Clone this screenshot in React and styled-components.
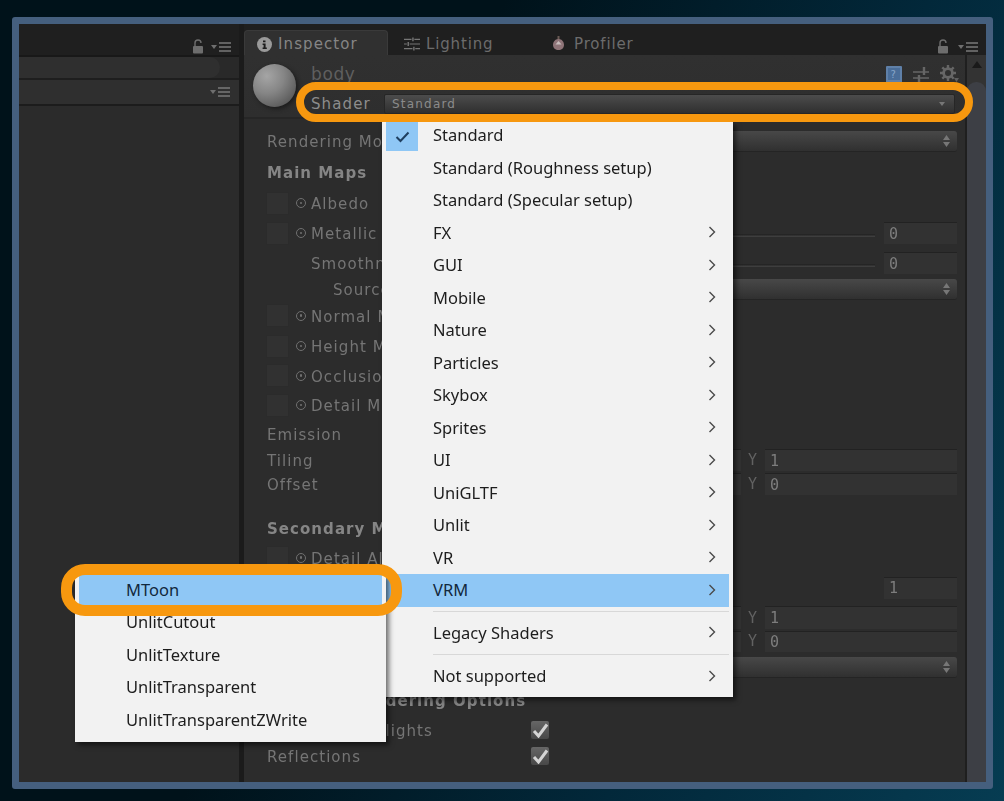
import React from "react";
import styled, { createGlobalStyle } from "styled-components";

const GlobalStyle = createGlobalStyle`
  html, body { margin: 0; height: 100%; }
  body {
    background: linear-gradient(112deg, #00121a 38%, #02283a 70%, #063c52 100%);
    font-family: "DejaVu Sans", sans-serif;
    overflow: hidden;
  }
`;

const Page = styled.div`
  width: 1004px;
  height: 801px;
  box-sizing: border-box;
  padding: 17px 11px 12px 12px;
`;

const Frame = styled.div`
  position: relative;
  height: 100%;
  box-sizing: border-box;
  border: 7px solid #455f7e;
  border-radius: 3px;
  display: grid;
  grid-template-columns: 220px 5px 1fr;
  background: #2c2c2c;
  overflow: hidden;
`;

const LeftPane = styled.div`
  display: flex;
  flex-direction: column;
  filter: blur(0.45px);
`;

const Divider = styled.div`
  background: #1b1b1b;
`;

const LeftTop = styled.div`
  height: 31px;
  background: #1f1f1f;
  display: flex;
  align-items: center;
  justify-content: flex-end;
  gap: 7px;
  padding-right: 7px;
  box-sizing: border-box;
  padding-top: 14px;
`;

const SearchRow = styled.div`
  height: 25px;
  background: #292929;
  border-top: 2px solid #181818;
  border-bottom: 2px solid #1e1e1e;
  box-sizing: border-box;
  padding-right: 19px;
`;

const SearchPill = styled.div`
  height: 100%;
  background: #2f2f2f;
  border-radius: 0 11px 11px 0;
`;

const LeftBar = styled.div`
  height: 26px;
  background: #2f2f2f;
  border-bottom: 2px solid #1c1c1c;
  box-sizing: border-box;
  display: flex;
  align-items: center;
  justify-content: flex-end;
  padding-right: 8px;
`;

const LeftBody = styled.div`
  flex: 1;
  background: #2b2b2b;
`;

const RightPane = styled.div`
  display: flex;
  flex-direction: column;
  min-width: 0;
  filter: blur(0.45px);
`;

const TabBar = styled.div`
  height: 31px;
  flex: none;
  background: #1f1f1f;
  display: flex;
  align-items: flex-end;
  padding-right: 7px;
`;

const Tab = styled.div`
  width: ${(p) => p.$width}px;
  height: 25px;
  box-sizing: border-box;
  display: flex;
  align-items: center;
  gap: ${(p) => p.$gap || 6}px;
  padding-left: ${(p) => p.$pad}px;
  padding-top: 2px;
  font-size: 15px;
  letter-spacing: ${(p) => (p.$active ? 1.1 : 0.85)}px;
  color: ${(p) => (p.$active ? "#858585" : "#6c6c6c")};
  background: ${(p) => (p.$active ? "#303030" : "transparent")};
  border-radius: 4px 4px 0 0;
  border: ${(p) => (p.$active ? "1px solid #3a3a3a" : "none")};
  border-bottom: none;
`;

const TabTools = styled.div`
  margin-left: auto;
  display: flex;
  align-items: center;
  gap: 9px;
  padding-bottom: 1px;
`;

const Body = styled.div`
  flex: 1;
  display: flex;
  min-height: 0;
`;

const Content = styled.div`
  flex: 1;
  min-width: 0;
  display: flex;
  flex-direction: column;
`;

const Header = styled.div`
  height: 64px;
  flex: none;
  box-sizing: border-box;
  background: linear-gradient(#303030, #2e2e2e);
  border-bottom: 2px solid #262626;
  display: flex;
  padding: 9px 10px 0 9px;
`;

const Sphere = styled.div`
  width: 43px;
  height: 43px;
  flex: none;
  border-radius: 50%;
  background: radial-gradient(circle at 32% 28%, #a5a5a5 0%, #868686 40%, #5a5a5a 80%, #464646 100%);
  box-shadow: 2px 2px 4px #1b1b1b;
`;

const HeaderMain = styled.div`
  flex: 1;
  margin-left: 15px;
  display: flex;
  flex-direction: column;
`;

const NameRow = styled.div`
  height: 20px;
  display: flex;
  align-items: center;
  font-size: 17px;
  letter-spacing: 0.6px;
  color: #5f5f5f;
`;

const HeaderIcons = styled.div`
  margin-left: auto;
  display: flex;
  align-items: center;
  gap: 11px;
  margin-right: -5px;
`;

const ShaderRow = styled.div`
  display: flex;
  align-items: center;
  height: 22px;
  margin-top: 9px;
  font-size: 15px;
  letter-spacing: 1.1px;
  color: #8c8c8c;
`;

const ShaderLabel = styled.span`
  width: 73px;
  flex: none;
`;

const ShaderSelect = styled.div`
  flex: 1;
  height: 20px;
  box-sizing: border-box;
  display: flex;
  align-items: center;
  justify-content: space-between;
  padding: 0 9px 0 7px;
  font-size: 12px;
  letter-spacing: 1.2px;
  color: #8b8b8b;
  border-radius: 2px;
  border: 1px solid #262626;
  background: linear-gradient(#4c4c4c, #2f2f2f);
`;

const Inspector = styled.div`
  flex: 1;
  padding: 10px 8px 0 22px;
`;

const Row = styled.div`
  height: ${(p) => p.$h}px;
  margin-top: ${(p) => p.$top || 0}px;
  display: flex;
  align-items: center;
  padding-left: ${(p) => p.$indent || 0}px;
  white-space: nowrap;
  font-size: 15px;
  letter-spacing: 1.05px;
  font-weight: ${(p) => (p.$bold ? 700 : 400)};
  color: ${(p) => (p.$bold ? "#858585" : "#757575")};
`;

const Label = styled.span`
  padding-top: ${(p) => (p.$bold ? 5 : 2)}px;
  margin-left: 1px;
`;

const Swatch = styled.div`
  width: 23px;
  height: 23px;
  flex: none;
  margin-right: 7px;
  background: #313131;
  box-shadow: inset 0 0 0 1px #2b2b2b;
`;

const DotIcon = styled.span`
  width: 10px;
  height: 10px;
  flex: none;
  box-sizing: border-box;
  margin-right: 4px;
  border: 1.2px solid #707070;
  border-radius: 50%;
  position: relative;
  &::after {
    content: "";
    position: absolute;
    inset: 2.8px;
    background: #707070;
    border-radius: 50%;
  }
`;

const Controls = styled.div`
  margin-left: auto;
  display: flex;
  align-items: center;
`;

const Select = styled.div`
  width: 300px;
  height: 21px;
  box-sizing: border-box;
  display: flex;
  align-items: center;
  justify-content: flex-end;
  padding-right: 7px;
  border-radius: 3px;
  background: linear-gradient(#484848, #303030);
  border-bottom: 1px solid #242424;
`;

const Field = styled.div`
  width: ${(p) => p.$w}px;
  height: ${(p) => p.$fh || 22}px;
  box-sizing: border-box;
  padding-left: 5px;
  display: flex;
  align-items: center;
  background: #323232;
  border-top: 1px solid #222222;
  font-family: "DejaVu Sans Mono", monospace;
  font-size: 15px;
  letter-spacing: 0;
  font-weight: 400;
  color: #7d7d7d;
`;

const SliderTrack = styled.div`
  width: 300px;
  height: 3px;
  margin-right: 9px;
  margin-top: 4px;
  background: linear-gradient(#1f1f1f, #444444);
`;

const AxisLabel = styled.span`
  width: 24px;
  box-sizing: border-box;
  padding-left: 7px;
  font-family: "DejaVu Sans Mono", monospace;
  font-size: 15px;
  letter-spacing: 0;
  color: #626262;
`;

const CheckBox = styled.div`
  width: 18px;
  height: 18px;
  margin-right: 408px;
  border-radius: 2px;
  background: linear-gradient(#666666, #484848);
  display: flex;
  align-items: center;
  justify-content: center;
`;

const Scrollbar = styled.div`
  width: 21px;
  flex: none;
  box-sizing: border-box;
  background: #333333;
  border-left: 2px solid #1f1f1f;
  display: flex;
  flex-direction: column;
  align-items: center;
`;

const ScrollArrow = styled.div`
  width: 0;
  height: 0;
  margin-top: 6px;
  border-left: 5px solid transparent;
  border-right: 5px solid transparent;
  border-bottom: 7px solid #1a1a1a;
`;

const ScrollThumb = styled.div`
  flex: 1;
  width: 100%;
  margin-top: 14px;
  border-radius: 9px 9px 0 0;
  background: #3d3f45;
`;

const Menu = styled.div`
  position: absolute;
  left: ${(p) => p.$left}px;
  top: ${(p) => p.$top}px;
  width: ${(p) => p.$width}px;
  box-sizing: border-box;
  padding: 0 4px ${(p) => p.$bottom}px;
  overflow: hidden;
  background: #f2f2f2;
  box-shadow: 3px 3px 5px rgba(0, 0, 0, 0.55);
  font-family: "Noto Sans", sans-serif;
  font-size: 16.5px;
  color: #1d1d1d;
`;

const MenuItem = styled.div`
  height: 32.5px;
  box-sizing: border-box;
  display: flex;
  align-items: center;
  padding: 0 13px 2px 47px;
  position: relative;
  background: ${(p) => (p.$hot ? "#8fc7f5" : "transparent")};
  color: ${(p) => (p.$hot ? "#12283c" : "#1d1d1d")};
  &:first-child {
    margin-top: ${(p) => p.$lead || 0}px;
  }
`;

const MenuSeparator = styled.div`
  height: ${(p) => p.$h}px;
  display: flex;
  align-items: center;
  margin-left: 47px;
  &::after {
    content: "";
    flex: 1;
    height: 1px;
    background: #d8d8d8;
  }
`;

const CheckCell = styled.div`
  position: absolute;
  left: 0;
  top: 3px;
  width: 32px;
  height: 29px;
  background: #8fc7f5;
  display: flex;
  align-items: center;
  justify-content: center;
`;

const Chevron = styled.svg`
  margin-left: auto;
  width: 8px;
  height: 12px;
`;

const Ring = styled.div`
  position: absolute;
  left: ${(p) => p.$left}px;
  top: ${(p) => p.$top}px;
  width: ${(p) => p.$width}px;
  height: ${(p) => p.$height}px;
  box-sizing: border-box;
  border: ${(p) => p.$stroke}px solid #f7980f;
  border-radius: ${(p) => p.$radius}px;
`;

const LockIcon = () => (
  <svg width="12" height="15" viewBox="0 0 12 15">
    <path d="M3 7V4a3 3 0 0 1 6 0" fill="none" stroke="#6d6d6d" strokeWidth="1.4" />
    <rect x="1" y="7" width="10" height="7.5" rx="1" fill="#6d6d6d" />
  </svg>
);

const PaneMenuIcon = () => (
  <svg width="21" height="10" viewBox="0 0 21 10">
    <path d="M0 3h6L3 7z" fill="#6f6f6f" />
    <path d="M8 1h12M8 5h12M8 9h12" stroke="#7a7a7a" strokeWidth="1.5" />
  </svg>
);

const InfoIcon = () => (
  <svg width="15" height="15" viewBox="0 0 15 15">
    <circle cx="7.5" cy="7.5" r="7.5" fill="#9a9a9a" />
    <path d="M6 3.5h2.5v1.7H6zM5.6 6.5h3v4h1.2v1.4H5.6v-1.4h1V7.9h-1z" fill="#1d1d1d" />
  </svg>
);

const LightingIcon = () => (
  <svg width="16" height="16" viewBox="0 0 17 16">
    <path d="M0 3h8M11 3h6M0 8h3M6 8h11M0 13h9M12 13h5" stroke="#767676" strokeWidth="1.3" />
    <path d="M9.5 1v4M4.5 6v4M10.5 11v4" stroke="#767676" strokeWidth="1.5" />
  </svg>
);

const ProfilerIcon = () => (
  <svg width="11" height="15" viewBox="0 0 11 15">
    <path d="M5.5 0v4" stroke="#6a5a55" strokeWidth="2" />
    <path d="M5.5 3C9 3 11 6 11 9c0 3-2.5 5-5.5 5S0 12 0 9c0-3 2-6 5.5-6z" fill="#8f7478" />
    <path d="M5.5 5l3 3.5H2.5z" fill="#c8bcbc" />
  </svg>
);

const BookIcon = () => (
  <svg width="16" height="17" viewBox="0 0 16 17">
    <rect width="16" height="17" rx="1" fill="#5f80a8" />
    <rect x="2" y="2" width="12" height="12" fill="#4a6d98" />
    <text x="4.5" y="12" fontSize="10" fontFamily="DejaVu Sans" fill="#86a4c8">?</text>
  </svg>
);

const PresetIcon = () => (
  <svg width="16" height="17" viewBox="0 0 16 17">
    <path d="M0 6h16M0 12h16" stroke="#666666" strokeWidth="1.6" />
    <path d="M11 1v8M6 9v8" stroke="#666666" strokeWidth="2.4" />
  </svg>
);

const GearIcon = () => (
  <svg width="20" height="18" viewBox="0 0 20 18">
    <circle cx="8" cy="8" r="4.4" fill="none" stroke="#666666" strokeWidth="2.8" />
    <path d="M8 0v3M8 13v3M0 8h3M13 8h3M2.3 2.3l2.2 2.2M11.5 11.5l2.2 2.2M13.7 2.3l-2.2 2.2M4.5 11.5l-2.2 2.2" stroke="#666666" strokeWidth="2.4" />
    <path d="M14 13h5l-2.5 4z" fill="#5f5f5f" />
  </svg>
);

const UpDownIcon = () => (
  <svg width="7" height="12" viewBox="0 0 7 12">
    <path d="M3.5 0L7 5H0zM3.5 12L0 7h7z" fill="#777" />
  </svg>
);

const TinyCheck = () => (
  <svg width="17" height="15" viewBox="0 0 17 15">
    <path d="M2 8l4.5 5L15 1.5" fill="none" stroke="#d4d4d4" strokeWidth="3" />
  </svg>
);

const XYField = ({ value, fh }) => (
  <>
    <Field $w={60} $fh={fh} />
    <AxisLabel>Y</AxisLabel>
    <Field $w={192} $fh={fh}>{value}</Field>
  </>
);

const slider = (
  <>
    <SliderTrack />
    <Field $w={73}>0</Field>
  </>
);

const rows = [
  { label: "Rendering Mode", h: 24, control: <Select><UpDownIcon /></Select> },
  { label: "Main Maps", h: 35, bold: true },
  { label: "Albedo", h: 30, map: true },
  { label: "Metallic", h: 30, map: true, control: slider },
  { label: "Smoothness", h: 30, indent: 44, control: slider },
  { label: "Source", h: 22, indent: 66, control: <Select><UpDownIcon /></Select> },
  { label: "Normal Map", h: 31, map: true },
  { label: "Height Map", h: 30, map: true },
  { label: "Occlusion", h: 29, map: true },
  { label: "Detail Mask", h: 30, map: true },
  { label: "Emission", h: 28 },
  { label: "Tiling", h: 24, control: <XYField value="1" /> },
  { label: "Offset", h: 24, control: <XYField value="0" /> },
  { label: "Secondary Maps", h: 28, top: 18, bold: true, tight: true },
  { label: "Detail Albedo x2", h: 31, map: true },
  { h: 29, control: <Field $w={73}>1</Field> },
  { h: 23, top: 4, control: <XYField value="1" fh={23} /> },
  { h: 22, top: 1, control: <XYField value="0" fh={21} /> },
  { h: 23, top: 4, control: <Select><UpDownIcon /></Select> },
  { label: "Forward Rendering Options", h: 24, top: 9, bold: true, tight: true },
  { label: "Specular Highlights", h: 28, top: 4, control: <CheckBox><TinyCheck /></CheckBox> },
  { label: "Reflections", h: 24, control: <CheckBox><TinyCheck /></CheckBox> },
];

const shaderGroups = [
  ["Standard", "Standard (Roughness setup)", "Standard (Specular setup)"],
  ["FX", "GUI", "Mobile", "Nature", "Particles", "Skybox", "Sprites", "UI", "UniGLTF", "Unlit", "VR", "VRM"],
];

const vrmShaders = ["MToon", "UnlitCutout", "UnlitTexture", "UnlitTransparent", "UnlitTransparentZWrite"];

const Arrow = () => (
  <Chevron viewBox="0 0 8 12">
    <path d="M1.5 1l5 5-5 5" fill="none" stroke="#4a4a4a" strokeWidth="1.4" />
  </Chevron>
);

const App = () => (
  <Page>
    <GlobalStyle />
    <Frame>
      <LeftPane>
        <LeftTop>
          <LockIcon />
          <PaneMenuIcon />
        </LeftTop>
        <SearchRow>
          <SearchPill />
        </SearchRow>
        <LeftBar>
          <PaneMenuIcon />
        </LeftBar>
        <LeftBody />
      </LeftPane>
      <Divider />
      <RightPane>
        <TabBar>
          <Tab $active $width={144} $pad={12}>
            <InfoIcon />
            Inspector
          </Tab>
          <Tab $width={165} $pad={16}>
            <LightingIcon />
            Lighting
          </Tab>
          <Tab $width={120} $pad={0} $gap={10}>
            <ProfilerIcon />
            Profiler
          </Tab>
          <TabTools>
            <LockIcon />
            <PaneMenuIcon />
          </TabTools>
        </TabBar>
        <Body>
          <Content>
            <Header>
              <Sphere />
              <HeaderMain>
                <NameRow>
                  body
                  <HeaderIcons>
                    <BookIcon />
                    <PresetIcon />
                    <GearIcon />
                  </HeaderIcons>
                </NameRow>
                <ShaderRow>
                  <ShaderLabel>Shader</ShaderLabel>
                  <ShaderSelect>
                    Standard
                    <svg width="6" height="4" viewBox="0 0 6 4">
                      <path d="M0 0h6L3 4z" fill="#777" />
                    </svg>
                  </ShaderSelect>
                </ShaderRow>
              </HeaderMain>
            </Header>
            <Inspector>
              {rows.map((row, i) => (
                <Row key={i} $h={row.h} $top={row.top} $indent={row.indent} $bold={row.bold}>
                  {row.map && <Swatch />}
                  {row.map && <DotIcon />}
                  {row.label && <Label $bold={row.bold && !row.tight}>{row.label}</Label>}
                  {row.control && <Controls>{row.control}</Controls>}
                </Row>
              ))}
            </Inspector>
          </Content>
          <Scrollbar>
            <ScrollArrow />
            <ScrollThumb />
          </Scrollbar>
        </Body>
      </RightPane>

      <Menu $left={363} $top={98} $width={351} $bottom={4}>
        {shaderGroups[0].map((name, i) => (
          <MenuItem key={name} $lead={i === 0 ? -2.75 : 0}>
            {i === 0 && (
              <CheckCell>
                <svg width="15" height="12" viewBox="0 0 15 12">
                  <path d="M1.5 6l4 4L13.5 1.5" fill="none" stroke="#1f3f60" strokeWidth="2" />
                </svg>
              </CheckCell>
            )}
            {name}
          </MenuItem>
        ))}
        {shaderGroups[1].map((name) => (
          <MenuItem key={name} $hot={name === "VRM"}>
            {name}
            <Arrow />
          </MenuItem>
        ))}
        <MenuSeparator $h={10} />
        <MenuItem>
          Legacy Shaders
          <Arrow />
        </MenuItem>
        <MenuSeparator $h={11} />
        <MenuItem>
          Not supported
          <Arrow />
        </MenuItem>
      </Menu>

      <Menu $left={56} $top={550} $width={311} $bottom={5}>
        {vrmShaders.map((name) => (
          <MenuItem key={name} $hot={name === "MToon"}>
            {name}
          </MenuItem>
        ))}
      </Menu>

      <Ring $left={277} $top={58} $width={677} $height={40} $stroke={8} $radius={20} />
      <Ring $left={42} $top={540} $width={341} $height={52} $stroke={11} $radius={24} />
    </Frame>
  </Page>
);

export default App;
